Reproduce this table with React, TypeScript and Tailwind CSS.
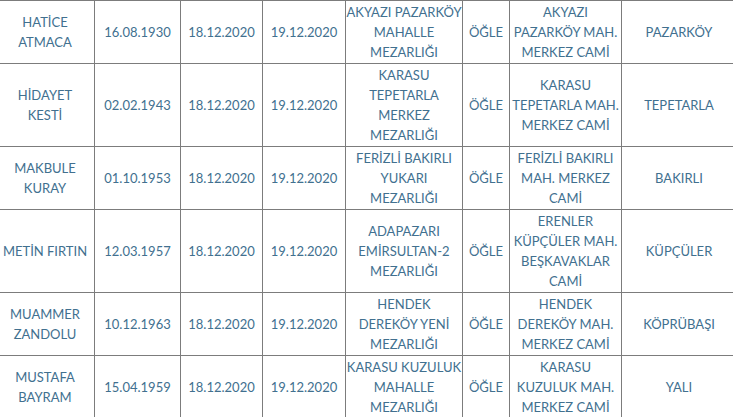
import React from "react";

type Row = {
  name: string[];
  birth: string;
  death: string;
  burial: string;
  place: string[];
  prayer: string;
  mosque: string[];
  district: string;
};

const rows: Row[] = [
  {
    name: ["HATİCE", "ATMACA"],
    birth: "16.08.1930",
    death: "18.12.2020",
    burial: "19.12.2020",
    place: ["AKYAZI PAZARKÖY", "MAHALLE", "MEZARLIĞI"],
    prayer: "ÖĞLE",
    mosque: ["AKYAZI", "PAZARKÖY MAH.", "MERKEZ CAMİ"],
    district: "PAZARKÖY",
  },
  {
    name: ["HİDAYET", "KESTİ"],
    birth: "02.02.1943",
    death: "18.12.2020",
    burial: "19.12.2020",
    place: ["KARASU", "TEPETARLA", "MERKEZ", "MEZARLIĞI"],
    prayer: "ÖĞLE",
    mosque: ["KARASU", "TEPETARLA MAH.", "MERKEZ CAMİ"],
    district: "TEPETARLA",
  },
  {
    name: ["MAKBULE", "KURAY"],
    birth: "01.10.1953",
    death: "18.12.2020",
    burial: "19.12.2020",
    place: ["FERİZLİ BAKIRLI", "YUKARI", "MEZARLIĞI"],
    prayer: "ÖĞLE",
    mosque: ["FERİZLİ BAKIRLI", "MAH. MERKEZ", "CAMİ"],
    district: "BAKIRLI",
  },
  {
    name: ["METİN FIRTIN"],
    birth: "12.03.1957",
    death: "18.12.2020",
    burial: "19.12.2020",
    place: ["ADAPAZARI", "EMİRSULTAN-2", "MEZARLIĞI"],
    prayer: "ÖĞLE",
    mosque: ["ERENLER", "KÜPÇÜLER MAH.", "BEŞKAVAKLAR", "CAMİ"],
    district: "KÜPÇÜLER",
  },
  {
    name: ["MUAMMER", "ZANDOLU"],
    birth: "10.12.1963",
    death: "18.12.2020",
    burial: "19.12.2020",
    place: ["HENDEK", "DEREKÖY YENİ", "MEZARLIĞI"],
    prayer: "ÖĞLE",
    mosque: ["HENDEK", "DEREKÖY MAH.", "MERKEZ CAMİ"],
    district: "KÖPRÜBAŞI",
  },
  {
    name: ["MUSTAFA", "BAYRAM"],
    birth: "15.04.1959",
    death: "18.12.2020",
    burial: "19.12.2020",
    place: ["KARASU KUZULUK", "MAHALLE", "MEZARLIĞI"],
    prayer: "ÖĞLE",
    mosque: ["KARASU", "KUZULUK MAH.", "MERKEZ CAMİ"],
    district: "YALI",
  },
];

const Cell: React.FC<{ lines: string[] }> = ({ lines }) => (
  <div className="flex flex-col items-center justify-center border-r border-b border-[#7c7c7c] py-[1px] px-[1px] text-center whitespace-nowrap">
    {lines.map((l, i) => (
      <span key={i}>{l}</span>
    ))}
  </div>
);

export default function App() {
  return (
    <div className="w-[733px] h-[417px] overflow-hidden bg-white">
      <div
        className="ml-[-4px] grid w-[741px] grid-cols-[99px_86px_82px_83px_117px_47px_112px_115px] border-t border-[#7c7c7c] text-[13px] leading-[20px] text-[#41708f]"
        style={{ fontFamily: "Lato, 'Noto Sans', sans-serif" }}
      >
        {rows.map((r, i) => (
          <React.Fragment key={i}>
            <Cell lines={r.name} />
            <Cell lines={[r.birth]} />
            <Cell lines={[r.death]} />
            <Cell lines={[r.burial]} />
            <Cell lines={r.place} />
            <Cell lines={[r.prayer]} />
            <Cell lines={r.mosque} />
            <Cell lines={[r.district]} />
          </React.Fragment>
        ))}
      </div>
    </div>
  );
}
